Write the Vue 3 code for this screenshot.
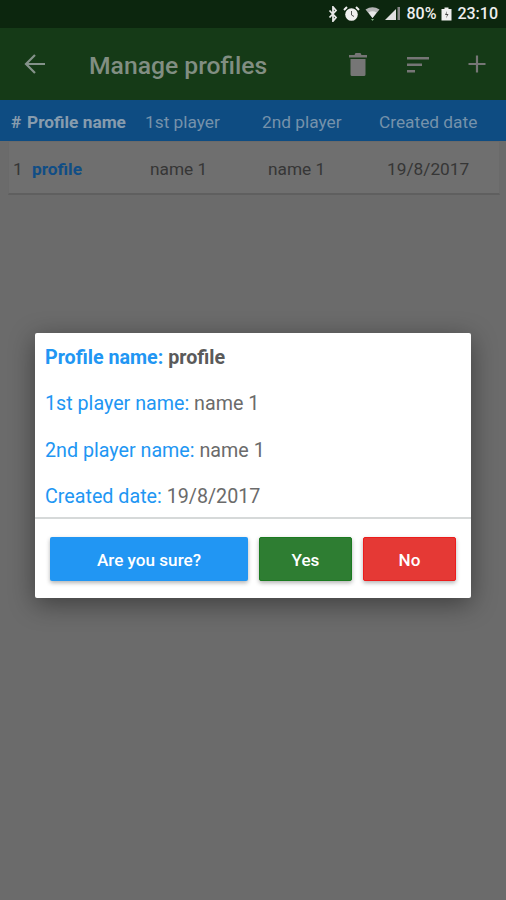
<template>
  <div class="page">
    <div class="status-bar">
      <svg width="10" height="16" viewBox="0 0 10 16"><path d="M1.500 4.500l6.500 7L5 15V1l3 3.500-6.500 7" fill="none" stroke="#e8e8e8" stroke-width="1.800"/></svg>
      <svg width="17" height="16" viewBox="0 0 17 16"><circle cx="8.500" cy="8.500" r="6.300" fill="#f0f0f0"/><path d="M1 4l3-3M16 4l-3-3" stroke="#f0f0f0" stroke-width="2"/><path d="M8.500 5v4l2.500 1.500" stroke="#555" stroke-width="1" fill="none"/></svg>
      <svg width="15" height="16" viewBox="0 0 15 16"><path d="M0.500 3.500Q7.500-1 14.500 3.500L7.500 12z" fill="#b5b5b5"/><path d="M3.500 6.500Q7.500 4 11.500 6.500L7.500 12z" fill="#e8e8e8"/><path d="M6 13l1.500 2 1.500-2z" fill="#7da87d"/></svg>
      <svg width="16" height="16" viewBox="0 0 16 16"><path d="M0 14L11 3v11z" fill="#e0e0e0"/><path d="M12.500 1h2.500v13h-2.500z" fill="#888"/></svg>
      <span class="st-text">80%</span>
      <svg width="11" height="16" viewBox="0 0 11 16"><path d="M3.500 1.500h4v1.500H10.500v11.500H0.500V3H3.500z" fill="#f0f0f0"/><path d="M6 5L4 9h2l-1 3.500 2.500-4.500H5.500z" fill="#444"/></svg>
      <span class="st-text">23:10</span>
    </div>

    <div class="toolbar">
      <svg class="back" width="24" height="24" viewBox="0 0 24 24"><path d="M22 12H3M12 3l-9 9 9 9" fill="none" stroke="#84928a" stroke-width="2.200"/></svg>
      <div class="title">Manage profiles</div>
      <div class="actions">
        <svg width="24" height="24" viewBox="0 0 24 24"><path d="M4.500 7h15v15.500q0 1.500-1.500 1.500H6q-1.500 0-1.500-1.500zM3 3h5.500l1-2h5l1 2H21v2.500H3z" fill="#767676"/></svg>
        <svg width="24" height="24" viewBox="0 0 24 24"><path d="M1 5h22v2.500H1zM1 11.500h15V14H1zM1 18h8v2.500H1z" fill="#767676"/></svg>
        <svg width="24" height="24" viewBox="0 0 24 24"><path d="M12 3.500v17M3.500 12h17" stroke="#767676" stroke-width="2.200"/></svg>
      </div>
    </div>

    <div class="table-head">
      <span class="c-num bold">#</span>
      <span class="c-name bold">Profile name</span>
      <span class="c-p1">1st player</span>
      <span class="c-p2">2nd player</span>
      <span class="c-date">Created date</span>
    </div>

    <div class="row">
      <span class="r-num">1</span>
      <span class="r-name">profile</span>
      <span class="r-p1">name 1</span>
      <span class="r-p2">name 1</span>
      <span class="r-date">19/8/2017</span>
    </div>

    <div class="overlay">
      <div class="dialog">
        <div class="info">
          <div class="line strong"><span class="label">Profile name:</span> <span class="value">profile</span></div>
          <div class="line"><span class="label">1st player name:</span> <span class="value">name 1</span></div>
          <div class="line"><span class="label">2nd player name:</span> <span class="value">name 1</span></div>
          <div class="line"><span class="label">Created date:</span> <span class="value">19/8/2017</span></div>
        </div>
        <div class="buttons">
          <button class="btn btn-sure">Are you sure?</button>
          <button class="btn btn-yes">Yes</button>
          <button class="btn btn-no">No</button>
        </div>
      </div>
    </div>
  </div>
</template>

<script setup>
</script>

<style>
html, body {
  margin: 0;
  background: #6b6b6b;
}
</style>

<style scoped>
.page {
  position: relative;
  width: 506px;
  height: 900px;
  overflow: hidden;
  background: #6b6b6b;
  font-family: Roboto, "Liberation Sans", sans-serif;
}

.status-bar {
  height: 28px;
  background: #0c260e;
  display: flex;
  align-items: center;
  justify-content: flex-end;
  gap: 5px;
  padding-right: 8px;
  box-sizing: border-box;
}

.st-text {
  color: #eeeeee;
  font-size: 16px;
  font-weight: 500;
  line-height: 28px;
}

.toolbar {
  height: 72px;
  background: #153a17;
  display: flex;
  align-items: center;
  padding-left: 23px;
  box-sizing: border-box;
}

.back {
  flex: none;
}

.title {
  margin: 3px 0 0 42px;
  font-size: 24.700px;
  font-weight: 500;
  color: #818e82;
  flex: 1;
}

.actions {
  display: flex;
  gap: 35.500px;
  padding-right: 17px;
}

.table-head {
  height: 41px;
  padding-top: 2px;
  background: #0e4c82;
  color: #7592ab;
  font-size: 17.300px;
  display: flex;
  align-items: center;
  box-sizing: border-box;
}

.bold {
  font-weight: 700;
  color: #879cae;
}

.c-num { margin-left: 11px; width: 16px; }
.c-name { width: 118px; }
.c-p1 { width: 117px; }
.c-p2 { width: 117px; }

.row {
  margin: 0 6px 0 8px;
  height: 54px;
  padding-top: 3px;
  background: #6f6f6f;
  border: 1px solid #6a6a6a;
  border-bottom: 2px solid #5f5f5f;
  box-sizing: border-box;
  display: flex;
  align-items: center;
  font-size: 17.300px;
  color: #363636;
}

.r-num { margin-left: 4px; width: 19px; }
.r-name { width: 118px; color: #104d85; font-weight: 700; }
.r-p1 { width: 118px; }
.r-p2 { width: 119px; }

.overlay {
  position: absolute;
  left: 0;
  right: 0;
  top: 31px;
  bottom: 0;
  display: flex;
  align-items: center;
  justify-content: center;
}

.dialog {
  width: 436px;
  height: 265px;
  background: #ffffff;
  border-radius: 2px;
  box-shadow: 0 6px 26px rgba(0, 0, 0, 0.42);
  box-sizing: border-box;
  display: flex;
  flex-direction: column;
}

.info {
  height: 186px;
  padding: 2px 0 0 10px;
  border-bottom: 2px solid #d6d9d9;
  box-sizing: border-box;
}

.line {
  height: 46.400px;
  line-height: 46.400px;
  font-size: 19.700px;
}

.label {
  color: #2196f3;
}

.value {
  color: #6b6b6b;
}

.strong .label,
.strong .value {
  font-weight: 700;
}

.strong .value {
  color: #5a5a5a;
}

.buttons {
  display: flex;
  gap: 11px;
  padding: 18px 15px 0;
}

.btn {
  height: 44px;
  border: none;
  border-radius: 2px;
  color: #ffffff;
  font-family: inherit;
  font-size: 17.100px;
  font-weight: 500;
  box-shadow: 0 2px 4px rgba(0, 0, 0, 0.3);
  padding: 1px 0 0;
}

.btn-sure {
  width: 198px;
  background: #2196f3;
}

.btn-yes {
  width: 93px;
  background: #2e7d32;
  border: 1px solid #1b7a20;
}

.btn-no {
  width: 93px;
  background: #e53935;
  border: 1px solid #ec1c1c;
}
</style>
